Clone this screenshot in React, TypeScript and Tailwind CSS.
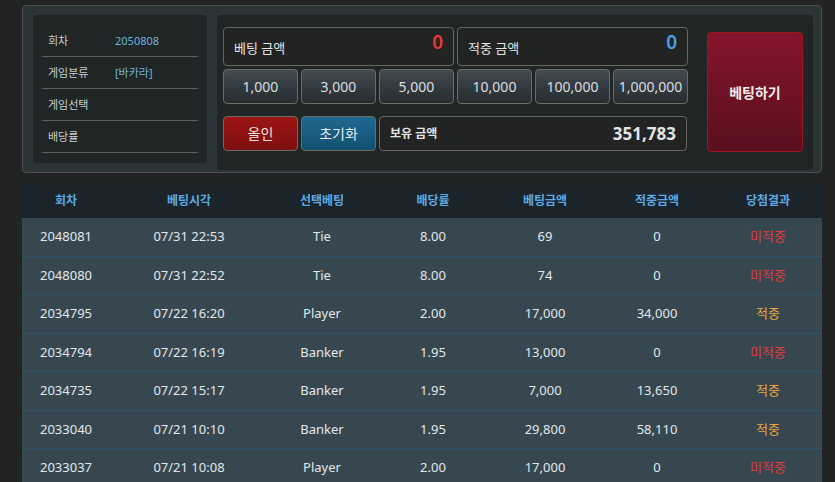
import React from "react";

const chips = ["1,000", "3,000", "5,000", "10,000", "100,000", "1,000,000"];

const rows = [
  { round: "2048081", time: "07/31 22:53", pick: "Tie", odds: "8.00", bet: "69", win: "0", result: "미적중" },
  { round: "2048080", time: "07/31 22:52", pick: "Tie", odds: "8.00", bet: "74", win: "0", result: "미적중" },
  { round: "2034795", time: "07/22 16:20", pick: "Player", odds: "2.00", bet: "17,000", win: "34,000", result: "적중" },
  { round: "2034794", time: "07/22 16:19", pick: "Banker", odds: "1.95", bet: "13,000", win: "0", result: "미적중" },
  { round: "2034735", time: "07/22 15:17", pick: "Banker", odds: "1.95", bet: "7,000", win: "13,650", result: "적중" },
  { round: "2033040", time: "07/21 10:10", pick: "Banker", odds: "1.95", bet: "29,800", win: "58,110", result: "적중" },
  { round: "2033037", time: "07/21 10:08", pick: "Player", odds: "2.00", bet: "17,000", win: "0", result: "미적중" },
];

const headers = ["회차", "베팅시각", "선택베팅", "배당률", "베팅금액", "적중금액", "당첨결과"];

const gridCols = "grid grid-cols-[88px_158px_108px_114px_110px_114px_108px]";

export default function App() {
  return (
    <div
      className="w-[835px] h-[482px] overflow-hidden bg-[#222424] pt-[5px] pl-[22px]"
      style={{ fontFamily: '"Noto Sans", "Noto Sans CJK KR", sans-serif' }}
    >
      {/* Top panel */}
      <div className="w-[800px] h-[168px] rounded-[4px] border border-[#4c5253] bg-[#2d3436] pt-[9px] pl-[10px] flex gap-[10px]">
        {/* Info box */}
        <div className="w-[174px] h-[148px] rounded-[4px] bg-[#202526] px-[9px] pt-[10px]">
          {[
            { label: "회차", value: "2050808" },
            { label: "게임분류", value: "[바카라]" },
            { label: "게임선택", value: "" },
            { label: "배당률", value: "" },
          ].map((r) => (
            <div key={r.label} className="h-[32px] flex items-center border-b border-[#5c5e58] px-[6px] pt-[2px]">
              <span className="w-[67px] text-[11px] text-[#c9cdcf]">{r.label}</span>
              <span className="text-[11px] text-[#6fb4da]">{r.value}</span>
            </div>
          ))}
        </div>

        {/* Betting area */}
        <div className="w-[596px] h-[155px] rounded-[4px] bg-[#202526] pt-[12px] pl-[6px] flex gap-[18px]">
          <div className="w-[466px] flex flex-col">
            <div className="flex gap-[3px]">
              <div className="w-[231px] h-[39px] rounded-[4px] border border-[#6a675d] bg-[#222323] flex justify-between px-[10px]">
                <span className="text-[13px] text-[#e4e4e4] mt-[11px]">베팅 금액</span>
                <span className="text-[19px] font-semibold text-[#e23b3b] leading-none mt-[5px]">0</span>
              </div>
              <div className="w-[231px] h-[39px] rounded-[4px] border border-[#6a675d] bg-[#222323] flex justify-between px-[10px]">
                <span className="text-[13px] text-[#e4e4e4] mt-[11px]">적중 금액</span>
                <span className="text-[19px] font-semibold text-[#4aa0e6] leading-none mt-[5px]">0</span>
              </div>
            </div>
            <div className="flex gap-[3px] mt-[3px]">
              {chips.map((c) => (
                <div
                  key={c}
                  className="w-[75px] h-[35px] rounded-[4px] border border-[#6e6b62] bg-gradient-to-b from-[#424b51] to-[#262c30] flex items-center justify-center text-[14px] text-[#dcdfe0]"
                >
                  {c}
                </div>
              ))}
            </div>
            <div className="flex gap-[3px] mt-[12px]">
              <div className="w-[75px] h-[35px] rounded-[4px] border border-[#6e6b62] bg-gradient-to-b from-[#9e1414] to-[#7c1010] flex items-center justify-center text-[14px] text-[#ece4e4]">
                올인
              </div>
              <div className="w-[75px] h-[35px] rounded-[4px] border border-[#6e6b62] bg-gradient-to-b from-[#1f6a91] to-[#134f70] flex items-center justify-center text-[14px] text-[#e2ecf0]">
                초기화
              </div>
              <div className="w-[308px] h-[35px] rounded-[4px] border border-[#6a675d] bg-[#222323] flex items-center justify-between px-[10px]">
                <span className="text-[12px] font-bold text-[#e4e4e4]">보유 금액</span>
                <span className="text-[17px] font-bold text-[#e4e4e4]">351,783</span>
              </div>
            </div>
          </div>
          <div className="w-[96px] h-[120px] mt-[5px] rounded-[4px] border border-[#a0151f] bg-gradient-to-b from-[#86142b] to-[#5a0f1e] flex items-center justify-center text-[14px] font-bold text-[#eee]">
            베팅하기
          </div>
        </div>
      </div>

      {/* Table */}
      <div className="w-[800px] mt-[10px]">
        <div className={`${gridCols} h-[35px] bg-[#1c242b] items-center`}>
          {headers.map((h) => (
            <div key={h} className="text-center text-[12px] font-bold text-[#5daae3]">
              {h}
            </div>
          ))}
        </div>
        {rows.map((r) => (
          <div
            key={r.round}
            className={`${gridCols} h-[38.5px] bg-[#37474f] border-b border-[#2b5568] items-center text-[13px] text-[#e2e8ec]`}
          >
            <div className="text-center">{r.round}</div>
            <div className="text-center">{r.time}</div>
            <div className="text-center">{r.pick}</div>
            <div className="text-center">{r.odds}</div>
            <div className="text-center">{r.bet}</div>
            <div className="text-center">{r.win}</div>
            <div className={`text-center ${r.result === "적중" ? "text-[#f0a73a]" : "text-[#e53a3d]"}`}>
              {r.result}
            </div>
          </div>
        ))}
      </div>
    </div>
  );
}
